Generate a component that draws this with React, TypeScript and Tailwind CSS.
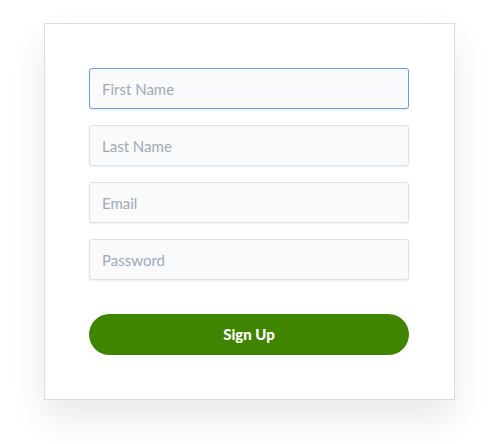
import React from "react";

export default function App() {
  const fields = ["First Name", "Last Name", "Email", "Password"];
  return (
    <div className="w-[500px] h-[444px] bg-white pt-[23px]" style={{ fontFamily: "Lato, 'Open Sans', sans-serif" }}>
      <div className="ml-[44px] w-[411px] h-[377px] bg-white border border-[#dcdcdc] shadow-[0_18px_34px_rgba(0,0,0,0.09)] pt-[44px] px-[44px]">
        <div className="flex flex-col gap-[16px]">
          {fields.map((f, i) => (
            <input
              key={f}
              placeholder={f}
              className={
                "h-[41px] w-[320px] rounded-[3px] bg-[#f8fafc] px-[12px] text-[15px] text-[#555] placeholder:text-[#a0abb6] outline-none border " +
                (i === 0
                  ? "border-[#6b9fd6] shadow-[0_1px_2px_rgba(0,0,0,0.08)]"
                  : "border-[#dde2e7] shadow-[0_1px_2px_rgba(0,0,0,0.08)]")
              }
            />
          ))}
        </div>
        <button className="mt-[34px] h-[41px] w-[320px] rounded-full bg-[#408500] text-white text-[15px] font-black">
          Sign Up
        </button>
      </div>
    </div>
  );
}
